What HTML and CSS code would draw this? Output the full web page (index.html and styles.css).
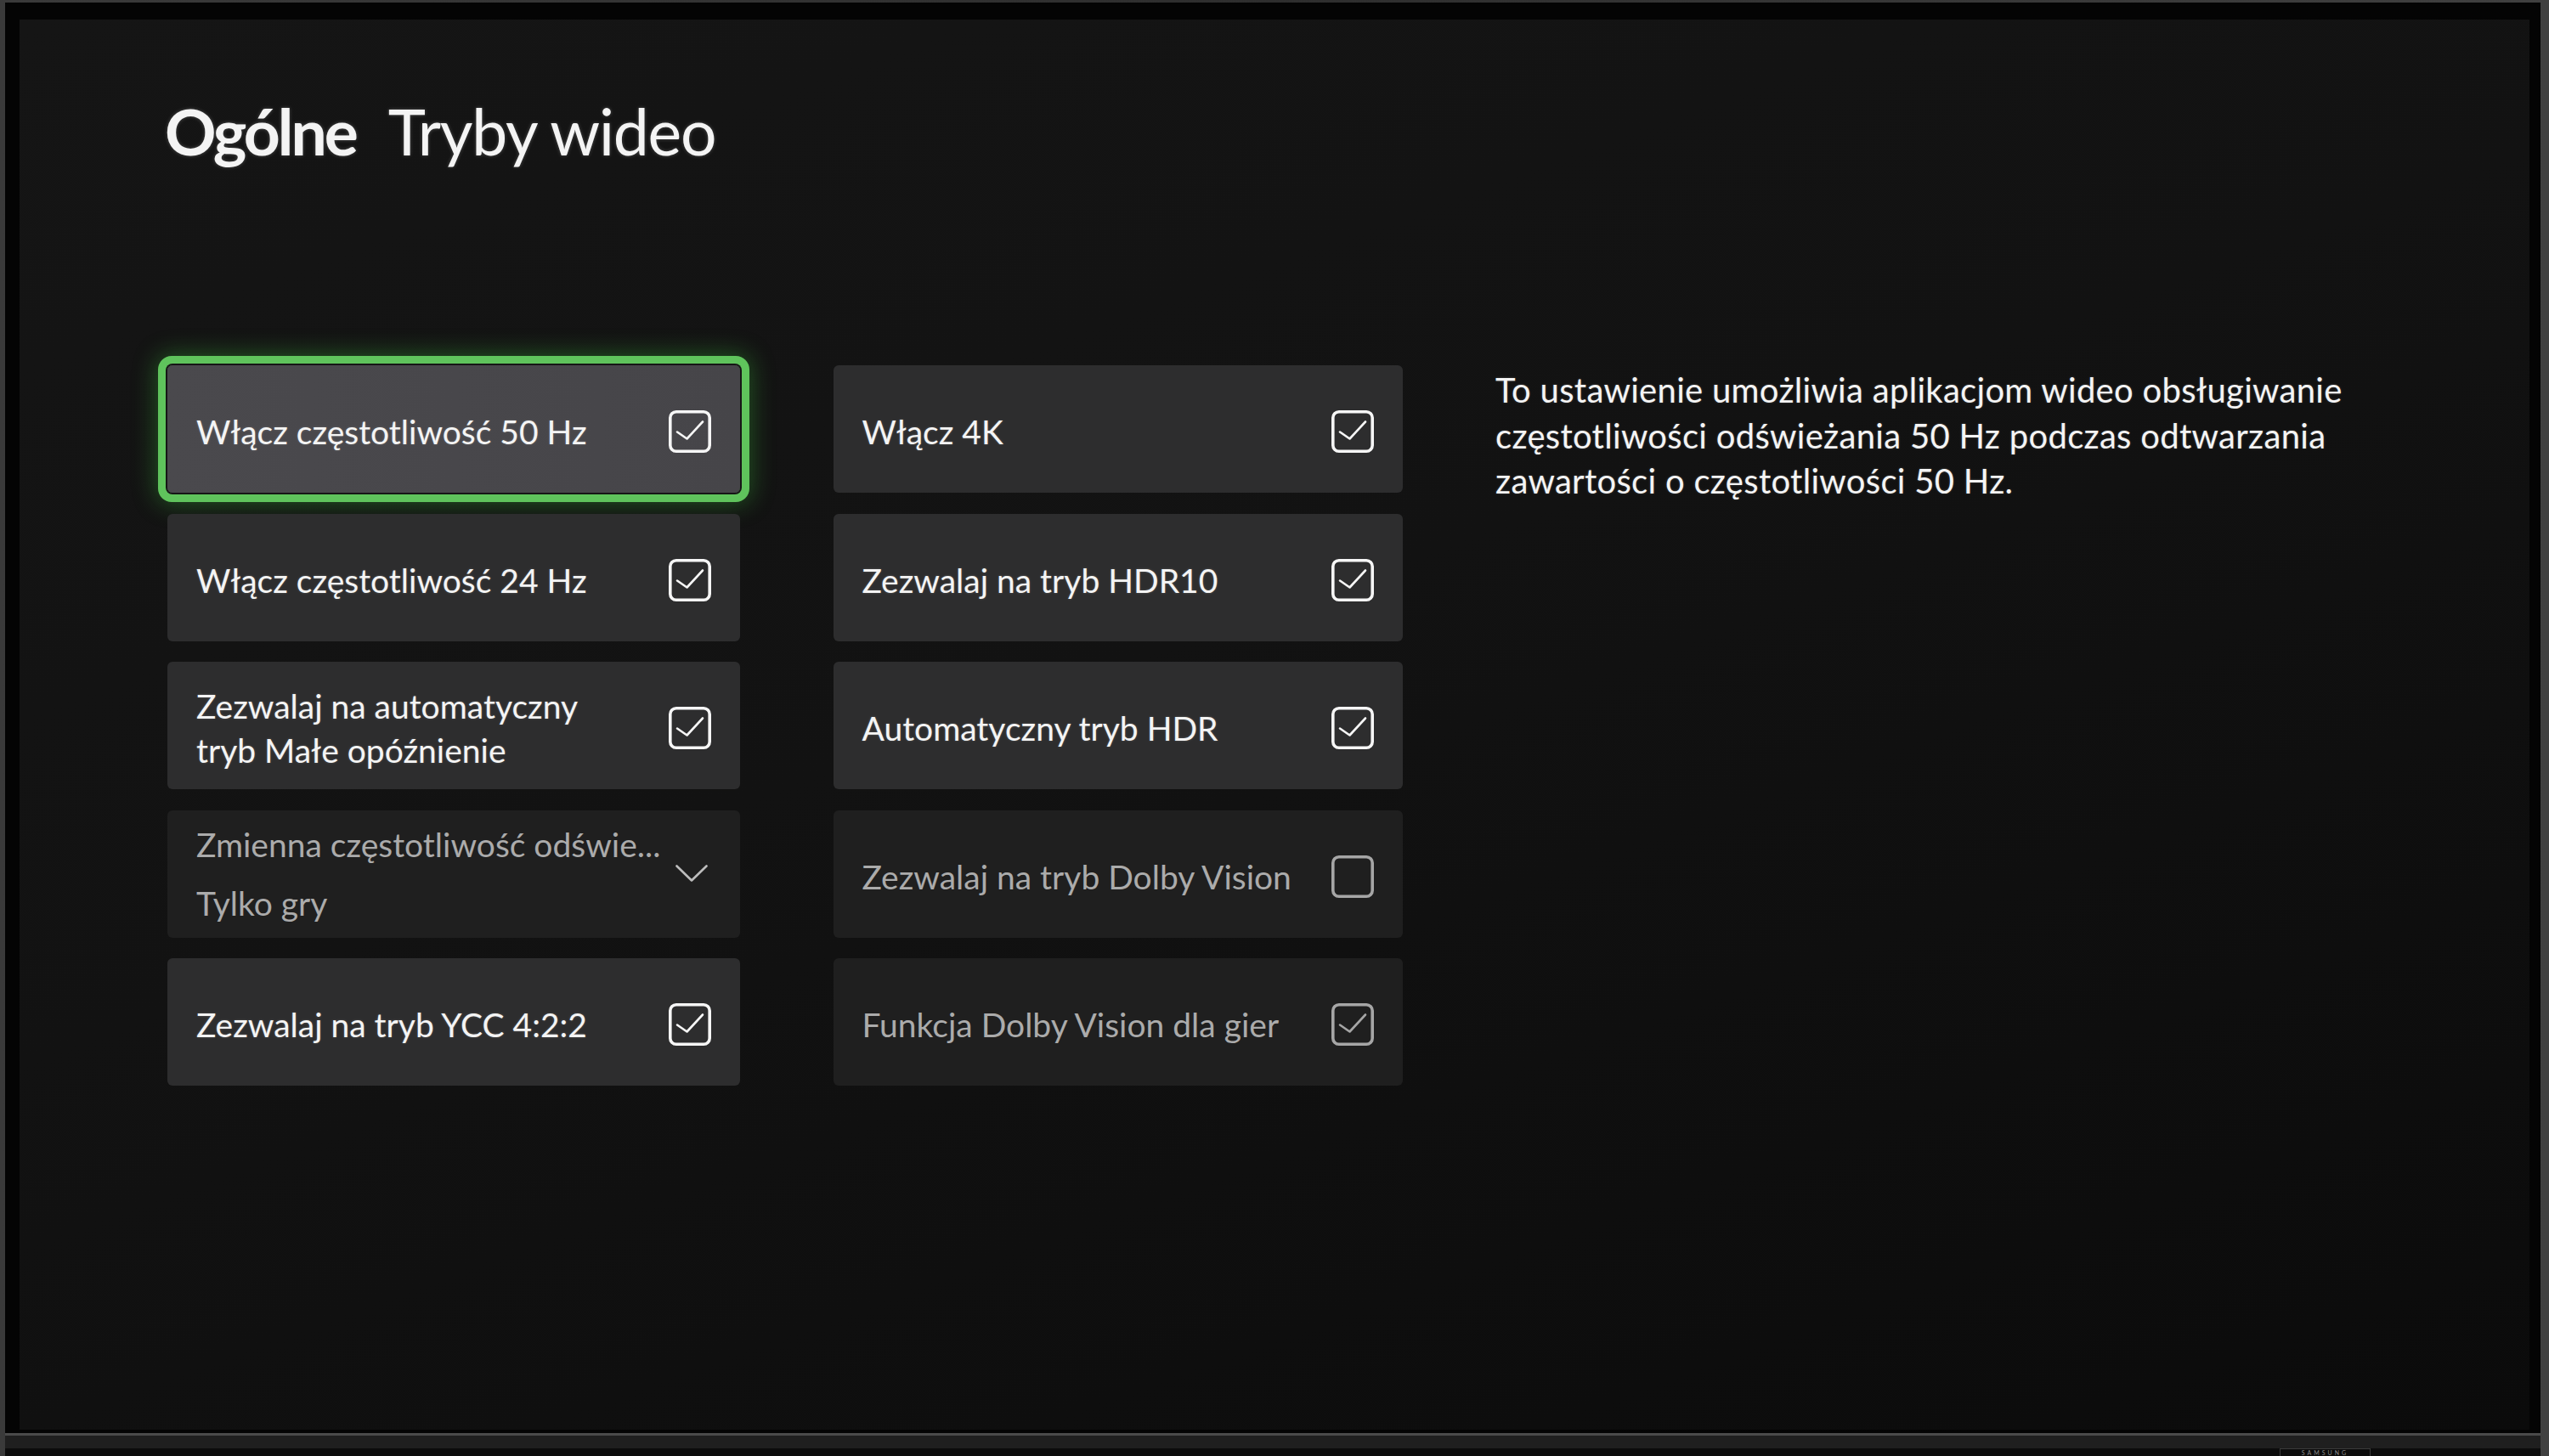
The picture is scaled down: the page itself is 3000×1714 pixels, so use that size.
FILE: index.html
```html
<!DOCTYPE html>
<html lang="pl">
<head>
    <meta charset="UTF-8">
    <meta name="viewport" content="width=device-width, initial-scale=1.0">
    <title>Ogólne - Tryby wideo</title>
    <link rel="stylesheet" href="styles.css">
</head>
<body>
    <!-- ikony wielokrotnego użytku -->
    <svg class="defs" aria-hidden="true">
        <symbol id="box-on" viewBox="0 0 50 50">
            <rect x="1.8" y="1.8" width="46.4" height="46.4" rx="7" fill="none" stroke="currentColor" stroke-width="3.6"/>
            <path d="M10 25.5 L21.5 33.5 L40 13.5" fill="none" stroke="currentColor" stroke-width="2.6" stroke-linecap="round" stroke-linejoin="round"/>
        </symbol>
        <symbol id="box-off" viewBox="0 0 50 50">
            <rect x="1.8" y="1.8" width="46.4" height="46.4" rx="7" fill="none" stroke="currentColor" stroke-width="3.6"/>
        </symbol>
        <symbol id="chevron" viewBox="0 0 38 20">
            <path d="M1.5 1.5 L19 18.5 L36.5 1.5" fill="none" stroke="currentColor" stroke-width="2.6" stroke-linecap="round" stroke-linejoin="round"/>
        </symbol>
    </svg>

    <div class="tv">
        <div class="bezel">
            <main class="screen">
                <h1 class="title"><span class="section">Ogólne</span><span class="page">Tryby wideo</span></h1>

                <div class="layout">
                    <div class="column">
                        <div class="option focused">
                            <span class="label">Włącz częstotliwość 50 Hz</span>
                            <svg class="box"><use href="#box-on"/></svg>
                        </div>
                        <div class="option">
                            <span class="label">Włącz częstotliwość 24 Hz</span>
                            <svg class="box"><use href="#box-on"/></svg>
                        </div>
                        <div class="option">
                            <span class="label">Zezwalaj na automatyczny<br>tryb Małe opóźnienie</span>
                            <svg class="box"><use href="#box-on"/></svg>
                        </div>
                        <div class="option disabled dropdown">
                            <div class="label">
                                <div class="name">Zmienna częstotliwość odświe...</div>
                                <div class="value">Tylko gry</div>
                            </div>
                            <svg class="chevron"><use href="#chevron"/></svg>
                        </div>
                        <div class="option">
                            <span class="label">Zezwalaj na tryb YCC 4:2:2</span>
                            <svg class="box"><use href="#box-on"/></svg>
                        </div>
                    </div>

                    <div class="column">
                        <div class="option">
                            <span class="label">Włącz 4K</span>
                            <svg class="box"><use href="#box-on"/></svg>
                        </div>
                        <div class="option">
                            <span class="label">Zezwalaj na tryb HDR10</span>
                            <svg class="box"><use href="#box-on"/></svg>
                        </div>
                        <div class="option">
                            <span class="label">Automatyczny tryb HDR</span>
                            <svg class="box"><use href="#box-on"/></svg>
                        </div>
                        <div class="option disabled">
                            <span class="label">Zezwalaj na tryb Dolby Vision</span>
                            <svg class="box"><use href="#box-off"/></svg>
                        </div>
                        <div class="option disabled">
                            <span class="label">Funkcja Dolby Vision dla gier</span>
                            <svg class="box"><use href="#box-on"/></svg>
                        </div>
                    </div>

                    <p class="help">To ustawienie umożliwia aplikacjom wideo obsługiwanie<br>częstotliwości odświeżania 50 Hz podczas odtwarzania<br>zawartości o częstotliwości 50 Hz.</p>
                </div>
            </main>
        </div>
        <div class="chin">
            <span class="brand">SAMSUNG</span>
        </div>
    </div>
</body>
</html>
```

FILE: styles.css
```css
body {
    margin: 0;
    background: #2c2c2c;
    font-family: Lato, "Noto Sans", sans-serif;
    color: #f4f4f4;
}
.defs {
    position: absolute;
    width: 0;
    height: 0;
}

/* obudowa telewizora */
.tv {
    width: 3000px;
    height: 1714px;
    box-sizing: border-box;
    display: flex;
    flex-direction: column;
    padding: 3px 10px 0 6px;
    background: linear-gradient(90deg, #3a3a3a, #2e2e2e 50%, #404040);
}
.bezel {
    background: #040404;
    padding: 20px 13px 4px 17px;
}
.chin {
    flex: 1;
    position: relative;
    border-top: 3px solid #4a4a4a;
    background: linear-gradient(#1f1f1f 0, #1f1f1f 15px, #0c0c0c 15px);
}
.brand {
    position: absolute;
    left: 2677px;
    top: 15px;
    width: 107px;
    height: 9px;
    border: 1px solid #3a3a3a;
    border-bottom: none;
    box-sizing: border-box;
    font-size: 7px;
    line-height: 9px;
    letter-spacing: 3px;
    text-align: center;
    color: #8a8a8a;
}

/* ekran */
.screen {
    display: block;
    width: 2954px;
    height: 1660px;
    box-sizing: border-box;
    padding: 86px 0 0 174px;
    background: linear-gradient(160deg, #151515 0%, #121212 45%, #0b0b0b 100%);
    overflow: hidden;
}
.title {
    margin: 0 0 0 -3px;
    font-size: 75px;
    line-height: 90px;
    font-weight: 400;
    white-space: nowrap;
    letter-spacing: -1.2px;
    text-shadow: 0 0 4px rgba(255, 255, 255, 0.25);
}
.section {
    font-weight: 700;
    letter-spacing: -3px;
    margin-right: 38px;
}

.layout {
    margin-top: 231px;
    display: grid;
    grid-template-columns: 674px 670px 1100px;
    column-gap: 109.5px;
    align-items: start;
}
.column {
    display: flex;
    flex-direction: column;
    gap: 24.5px;
}

.option {
    height: 150px;
    box-sizing: border-box;
    display: flex;
    align-items: center;
    justify-content: space-between;
    padding: 6px 34px 0 34px;
    background: #2d2d2e;
    border-radius: 6px;
    font-size: 39px;
    line-height: 52px;
    text-shadow: 0 0 3px rgba(255, 255, 255, 0.2);
}
.option.focused {
    background: linear-gradient(90deg, #4a494d, #464549);
    box-shadow: 0 0 0 2px #161616, 0 0 0 11px #5fc35c, 0 0 28px 13px rgba(60, 190, 60, 0.38);
}
.option.disabled {
    background: #1f1f1f;
    color: #ababab;
    text-shadow: none;
}
.box {
    width: 50px;
    height: 50px;
    flex-shrink: 0;
    color: #f6f6f6;
}
.disabled .box {
    color: #a6a6a6;
}

.dropdown {
    align-items: flex-start;
    padding-top: 14px;
    padding-right: 38px;
}
.dropdown .value {
    margin-top: 17px;
}
.chevron {
    width: 38px;
    height: 20px;
    margin-top: 50px;
    color: #bdbdbd;
}

.help {
    margin: 0;
    padding-top: 3px;
    font-size: 40px;
    line-height: 53.5px;
    letter-spacing: 0.3px;
    white-space: nowrap;
    text-shadow: 0 0 3px rgba(255, 255, 255, 0.2);
}
```
